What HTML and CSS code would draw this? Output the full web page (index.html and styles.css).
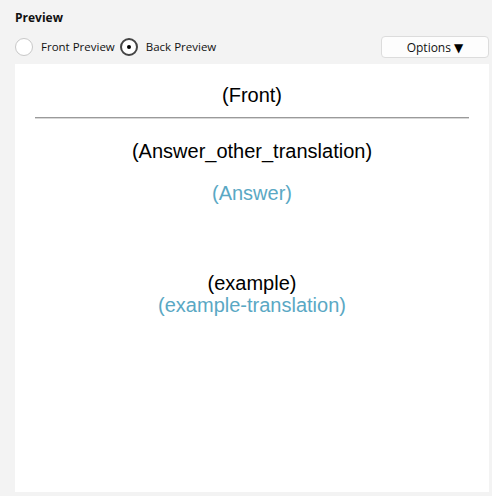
FILE: index.html
```html
<!DOCTYPE html>
<html lang="en">
<head>
    <meta charset="UTF-8">
    <meta name="viewport" content="width=device-width, initial-scale=1.0">
    <title>Preview</title>
    <link rel="stylesheet" href="styles.css">
</head>
<body>
<h3 class="title">Preview</h3>
<div class="toolbar">
    <label class="radio">
        <span class="dot"></span>
        Front Preview
    </label>
    <label class="radio checked">
        <span class="dot"></span>
        Back Preview
    </label>
    <button class="options">Options <span class="arrow">&#9660;</span></button>
</div>
<div class="card">
    <div class="front">(Front)</div>
    <hr class="answer-line">
    <div class="other">(Answer_other_translation)</div>
    <div class="answer">(Answer)</div>
    <div class="example">(example)</div>
    <div class="example-tr">(example-translation)</div>
</div>
</body>
</html>
```

FILE: styles.css
```css
body {
    margin: 0;
    background-color: #f3f3f3;
    font-family: "Open Sans", "Noto Sans", sans-serif;
    font-size: 11.5px;
    color: #111;
}
.title {
    margin: 0;
    padding: 9px 0 0 15px;
    font-size: 12px;
    font-weight: bold;
    line-height: 17px;
}
.toolbar {
    display: flex;
    align-items: center;
    height: 22px;
    margin: 10px 3px 0 15px;
}
.radio {
    display: flex;
    align-items: center;
    gap: 8px;
    margin-right: 5px;
    line-height: 16px;
}
.dot {
    width: 18px;
    height: 18px;
    border: 1px solid #c8c8c8;
    border-radius: 50%;
    background-color: #fff;
    box-sizing: border-box;
    display: flex;
    align-items: center;
    justify-content: center;
}
.radio.checked .dot {
    border: 2px solid #444;
}
.radio.checked .dot::after {
    content: "";
    width: 4px;
    height: 4px;
    border-radius: 50%;
    background-color: #000;
}
.options {
    margin-left: auto;
    width: 108px;
    height: 22px;
    font-family: "Open Sans", "Noto Sans", sans-serif;
    font-size: 12px;
    color: #111;
    background-color: #fdfdfd;
    border: 1px solid #dcdcdc;
    border-radius: 4px;
    padding: 0;
}
.arrow {
    font-family: "DejaVu Sans", sans-serif;
    font-size: 12px;
    color: #000;
}
.card {
    margin: 6px 3px 0 15px;
    height: 408px;
    padding: 20px 20px 0;
    background-color: #fff;
    font-family: "Liberation Sans", Arial, sans-serif;
    font-size: 20px;
    line-height: 22px;
    text-align: center;
    color: #000;
}
.answer-line {
    margin: 11px 0 0;
    border: none;
    border-top: 1px solid #9a9a9a;
    border-bottom: 1px solid #d8d8d8;
}
.other {
    margin-top: 21px;
}
.answer {
    margin-top: 20px;
    color: #5aa8c4;
}
.example {
    margin-top: 68px;
}
.example-tr {
    color: #5aa8c4;
}
```
